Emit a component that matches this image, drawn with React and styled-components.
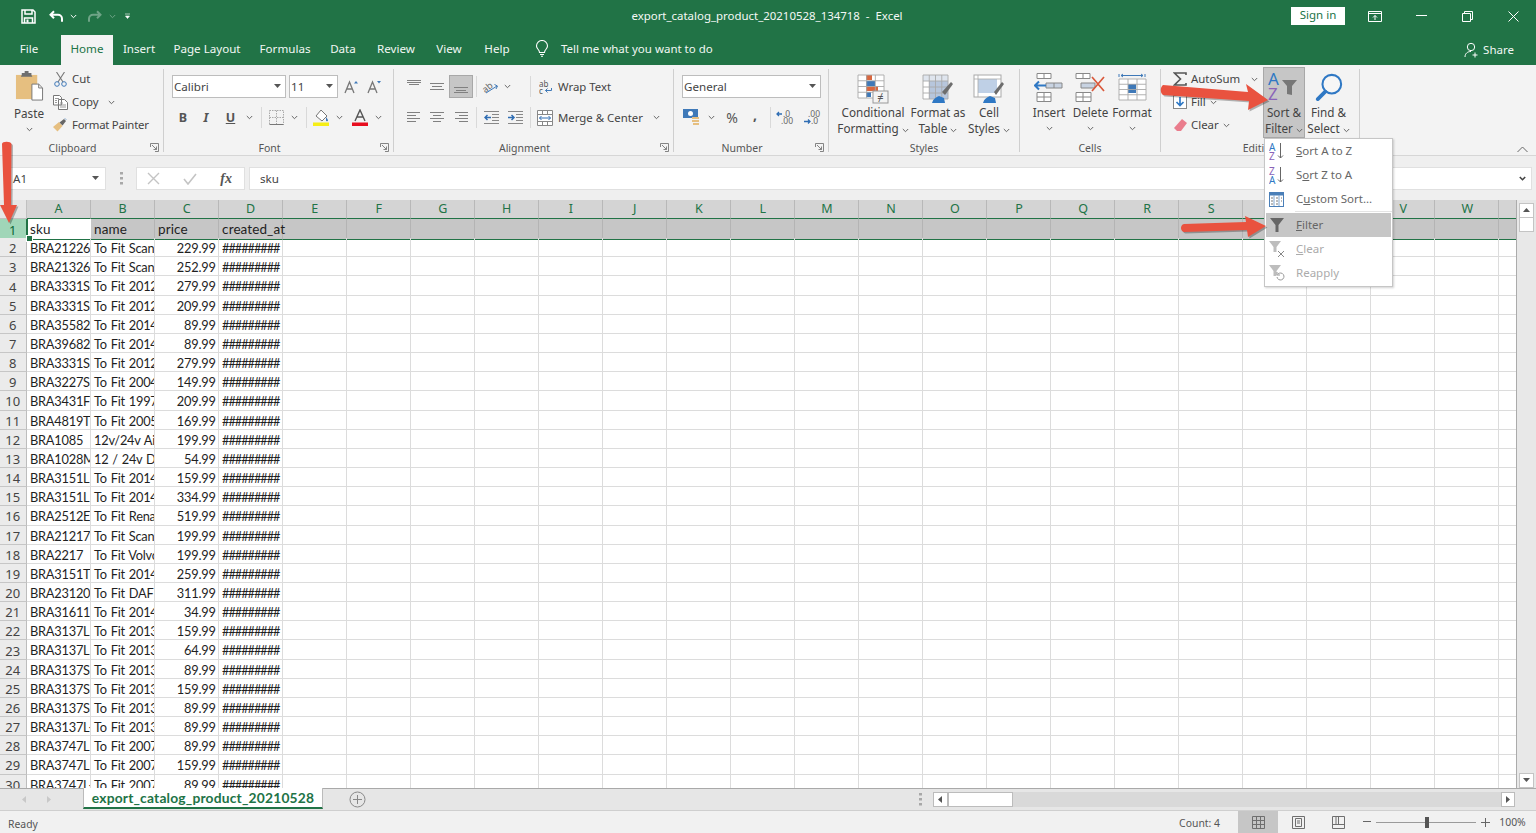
import React from 'react';
import styled, { createGlobalStyle } from 'styled-components';

const UI = '"Noto Sans", "Open Sans", sans-serif';
const CELL = 'Lato, "Liberation Sans", sans-serif';
const GREEN = '#217346';

const Global = createGlobalStyle`
  html, body { margin: 0; padding: 0; background: #fff; }
  * { box-sizing: border-box; }
`;

const Page = styled.div`
  position: relative; width: 1536px; height: 833px; overflow: hidden;
  display: flex; flex-direction: column; font-family: ${UI}; font-size: 11.4px; color: #444;
`;

/* ---------- title bar ---------- */
const TitleBar = styled.header`
  height: 32px; background: ${GREEN}; color: #fff; display: flex; align-items: center; position: relative; flex: none;
`;
const Qat = styled.div`display: flex; align-items: center; padding-left: 20px; width: 600px;`;
const QatSlot = styled.span`
  width: ${p => p.$w}px; margin-left: ${p => p.$ml || 0}px; display: flex; justify-content: center; align-items: center;
  opacity: ${p => (p.$dim ? 0.35 : 1)};
`;
const DocTitle = styled.div`
  position: absolute; left: 0; width: 1534px; text-align: center; font-size: 11.45px; color: #f4f8f5; top: 8px; line-height: 16px; white-space: pre;
`;
const WinControls = styled.div`display: flex; align-items: center; margin-left: auto;`;
const SignIn = styled.button`
  width: 54px; height: 18px; border: 0; background: #fff; color: ${GREEN}; font: 11.5px/16px ${UI}; padding: 0 0 2px; margin-right: 7px;
`;
const WinBtn = styled.span`width: 46px; height: 32px; display: flex; align-items: center; justify-content: center;`;

/* ---------- tabs ---------- */
const TabBar = styled.nav`height: 33px; background: ${GREEN}; display: flex; align-items: flex-end; flex: none; color: #f2f7f4; position: relative;`;
const Tab = styled.span`
  width: ${p => p.$w}px; height: 30px; display: flex; align-items: center; justify-content: center; padding-bottom: 4px; font-size: 11.6px;
  padding-right: ${p => p.$pr || 0}px;
  background: ${p => (p.$active ? '#f3f3f3' : 'transparent')}; color: ${p => (p.$active ? GREEN : '#f2f7f4')};
`;
const TellMe = styled.span`display: flex; align-items: center; height: 30px; gap: 12px; margin-left: 12px; font-size: 11.5px; padding-bottom: 4px;`;
const Share = styled.span`margin-left: auto; height: 30px; display: flex; align-items: center; gap: 3px; padding-right: 22px; font-size: 11.5px; padding-bottom: 1px;`;

/* ---------- ribbon ---------- */
const Ribbon = styled.section`
  height: 91px; background: #f3f3f3; border-bottom: 1px solid #d6d6d6; display: flex; padding-top: 4px; flex: none; position: relative;
`;
const Group = styled.div`
  width: ${p => p.$w}px; height: 83px; border-right: 1px solid #cfcfcf; display: flex; flex-direction: column; flex: none;
`;
const GroupBody = styled.div`height: 73px; display: flex; padding-left: ${p => p.$pl || 0}px;`;
const GroupFoot = styled.div`height: 12px; display: flex; align-items: center; font-size: 10.5px; color: #555; margin-top: 0;`;
const GroupName = styled.span`flex: 1; text-align: center; line-height: 14px; margin-top: 3px;`;
const Launcher = styled.span`width: 18px; display: flex; justify-content: center; margin-top: 3px;`;
const Stack3 = styled.div`display: flex; flex-direction: column; gap: 3px; width: ${p => p.$w}px; flex: none;`;
const SmallRow = styled.div`height: 20px; display: flex; align-items: center; white-space: nowrap;`;
const SmallIcon = styled.span`width: ${p => p.$w}px; margin-left: ${p => p.$ml || 0}px; display: flex; justify-content: center; align-items: center; flex: none;`;
const SmallText = styled.span`margin-left: ${p => p.$ml || 0}px; padding-bottom: 2px; letter-spacing: ${p => p.$ls || 0}px;`;
const Stack2 = styled.div`display: flex; flex-direction: column; gap: 8px; padding-top: 6px;`;
const ToolRow = styled.div`height: 23px; display: flex; align-items: center; white-space: nowrap;`;
const Slot = styled.span`
  width: ${p => p.$w}px; height: 23px; margin-left: ${p => p.$ml || 0}px; flex: none; display: flex; align-items: center; justify-content: center;
  padding-left: ${p => p.$pl || 0}px;
  ${p => p.$on && 'background:#c6c6c6; border:1px solid #a8a8a8;'}
`;
const VSep = styled.span`width: 1px; height: 21px; background: #d9d9d9; margin-left: ${p => p.$ml || 0}px; flex: none;`;
const Combo = styled.div`
  width: ${p => p.$w}px; height: 23px; margin-left: ${p => p.$ml || 0}px; background: #fff; border: 1px solid #bdbdbd; display: flex; align-items: center;
  justify-content: space-between; padding: 0 4px 0 1px; flex: none; font-size: 11.6px; color: #444;
`;
const Glyph = styled.span`
  font: ${p => p.$font || `700 12.5px ${UI}`}; color: #555; ${p => p.$under && 'text-decoration: underline;'}
  ${p => p.$it && 'font-style: italic;'}
  margin-bottom: ${p => p.$mb || 0}px;
`;
const Large = styled.div`
  width: ${p => p.$w}px; flex: none; display: flex; flex-direction: column; align-items: center; text-align: center; line-height: 16px;
  white-space: nowrap; font-size: 11.7px; padding-left: ${p => p.$pl || 0}px;
  ${p => p.$on && 'background:#c6c6c6; border:1px solid #a8a8a8; margin-top:-2px; height:71px;'}
`;
const LargeIcon = styled.span`height: ${p => p.$h || 35}px; display: flex; align-items: flex-start; padding-top: ${p => p.$top ?? 2}px; flex: none;`;
const ChevLine = styled.span`height: 16px; display: flex; align-items: center;`;
const Collapse = styled.span`position: absolute; right: 8px; bottom: 2px; display: flex;`;

/* ---------- formula ---------- */
const FormulaBar = styled.div`
  height: 44px; background: #efefef; padding: 11px 4px 0 10px; display: flex; align-items: flex-start; flex: none; font-size: 11.6px;
`;
const NameBox = styled.div`
  width: 96px; height: 23px; background: #fff; display: flex; align-items: center; justify-content: space-between; padding: 0 6px 0 2px; color: #444; flex: none;
  border: 1px solid #e0e0e0;
`;
const Dots = styled.span`width: 30px; height: 23px; flex: none; display: flex; justify-content: center; align-items: center;`;
const FxBox = styled.div`
  width: 109px; height: 23px; background: #fff; border: 1px solid #e0e0e0; display: flex; align-items: center; flex: none; justify-content: space-between; padding: 0 12px 0 10px;
`;
const Fx = styled.span`font: italic 700 14px "Liberation Serif", serif; color: #555;`;
const Input = styled.div`
  flex: 1; margin-left: 4px; height: 23px; background: #fff; border: 1px solid #e0e0e0; display: flex; align-items: center; justify-content: space-between;
  padding: 0 5px 0 10px; color: #444;
`;

/* ---------- sheet ---------- */
const SheetArea = styled.main`flex: 1; min-height: 0; display: flex; background: #fff; overflow: hidden;`;
const GridPane = styled.div`width: 1516px; overflow: hidden; flex: none;`;
const GridRow = styled.div`display: grid; grid-template-columns: 26.5px repeat(24, 64.04px); height: ${p => p.$h}px;`;
const Corner = styled.div`background: #e6e6e6; border-right: 1px solid #c0c0c0; border-bottom: 1px solid #c0c0c0;`;
const ColHead = styled.div`
  background: #d4d4d4; color: ${GREEN}; border-right: 1px solid #b8b8b8; border-bottom: 1px solid ${GREEN};
  display: flex; align-items: center; justify-content: center; font-size: 12.5px; line-height: 1; padding: 1px 0 0 1px;
`;
const RowHead = styled.div`
  background: ${p => (p.$sel ? '#a0d6b8' : '#ebebeb')}; color: ${p => (p.$sel ? '#0e6637' : '#444')};
  border-right: 1px solid ${p => (p.$sel ? GREEN : '#bdbdbd')}; border-bottom: 1px solid #c6c6c6;
  display: flex; align-items: center; justify-content: center; font-size: 13px; line-height: 1; padding-top: 3px;
`;
const Cell = styled.div`
  position: relative; font: 12.8px/21px ${CELL}; color: #1f1f1f; white-space: nowrap; overflow: hidden; padding: 0 2px 0 3.5px; word-spacing: .8px;
  letter-spacing: ${p => (p.$hash ? '-1.05px' : '-.22px')};
  border-right: 1px solid #dcdcdc; border-bottom: 1px solid #dcdcdc; text-align: ${p => (p.$num ? 'right' : 'left')};
`;
const SelCell = styled(Cell)`
  background: #c6c6c6; border-right-color: #b4b4b4; border-bottom: 1px solid ${GREEN}; overflow: visible; font-size: 13.5px; line-height: 20px; letter-spacing: .1px;
  z-index: ${p => (p.$over ? 1 : 0)};
`;
const ActiveCell = styled(SelCell)`
  background: #fff; border-left: 1px solid ${GREEN}; padding-left: 2.5px; border-right-color: transparent;
  &::after { content: ''; position: absolute; left: -2px; bottom: -3px; width: 5px; height: 5px; background: ${GREEN}; border: 1px solid #fff; }
`;
const VScroll = styled.aside`width: 20px; background: #e8e8e8; border-left: 1px solid #ababab; display: flex; flex-direction: column; align-items: center; padding-top: 3px;`;
const ScrollBtn = styled.span`
  width: 15px; height: 15px; background: #fff; border: 1px solid #c4c4c4; display: flex; align-items: center; justify-content: center; flex: none;
`;
const VThumb = styled.span`width: 15px; height: 15px; background: #fff; border: 1px solid #c4c4c4; margin-top: -1px; flex: none;`;
const Spring = styled.span`flex: 1;`;

/* ---------- sheet tabs ---------- */
const SheetTabs = styled.div`
  height: 23px; background: #e6e6e6; border-top: 1px solid #a9a9a9; border-bottom: 1px solid #cfcfcf; display: flex; align-items: stretch; flex: none;
`;
const NavArrows = styled.span`width: 83px; display: flex; align-items: center; gap: 18px; padding-left: 21px; flex: none;`;
const SheetTab = styled.span`
  width: 240px; background: #fff; color: ${GREEN}; font: 700 13.8px ${CELL}; display: flex; align-items: center; justify-content: center; margin-top: -1px;
  border-bottom: 2px solid ${GREEN}; border-left: 1px solid #bbb; border-right: 1px solid #bbb; height: 21px; flex: none; letter-spacing: .2px;
`;
const AddSheet = styled.span`margin-left: 26px; display: flex; align-items: center; flex: none;`;
const HDots = styled.span`margin-left: auto; width: 20px; padding-right: 6px; display: flex; align-items: center; justify-content: center;`;
const HScroll = styled.div`width: 582px; margin-right: 21px; display: flex; align-items: center; background: #d9d9d9; margin-top: 3px; height: 15px;`;
const HBtn = styled.span`width: ${p => p.$w}px; height: 15px; background: #fff; border: 1px solid #bcbcbc; display: flex; align-items: center; justify-content: center; flex: none;`;

/* ---------- status ---------- */
const StatusBar = styled.footer`height: 22px; background: #f1f1f1; display: flex; align-items: center; padding-left: 8px; font-size: 10.4px; color: #555; flex: none;`;
const Ready = styled.span`padding-top: 3px;`;
const Count = styled.span`margin-right: 18px; padding-top: 1px;`;
const StatusRight = styled.div`margin-left: auto; display: flex; align-items: center; height: 100%;`;
const ViewBtn = styled.span`
  width: ${p => p.$w}px; height: 100%; display: flex; align-items: center; justify-content: center; background: ${p => (p.$on ? '#c6c6c6' : 'transparent')};
  padding-right: ${p => p.$pr || 0}px;
`;
const Slider = styled.span`width: 100px; height: 1px; background: #9a9a9a; position: relative;`;
const SliderThumb = styled.span`position: absolute; left: 49px; top: -5px; width: 4px; height: 11px; background: #555;`;

/* ---------- menu ---------- */
const Menu = styled.div`
  position: absolute; left: 1264px; top: 138px; width: 129px; height: 149px; background: #fff; border: 1px solid #c6c6c6; box-shadow: 1px 1px 2px rgba(0,0,0,.18); font-size: 11.5px; z-index: 2;
`;
const MenuItem = styled.div`
  height: 24px; display: flex; align-items: center; margin: 0 1px; color: ${p => (p.$off ? '#ababab' : '#666')}; background: ${p => (p.$on ? '#c6c6c6' : 'transparent')};
  white-space: nowrap;
`;
const MenuIcon = styled.span`width: 30px; display: flex; justify-content: flex-start; padding-left: 3px; flex: none;`;
const MenuLabel = styled.span`padding-bottom: 2px;`;
const MenuSep = styled.div`height: 2px; margin-left: 30px; border-top: 1px solid #e4e4e4;`;
const Key = styled.u`text-underline-offset: 1px;`;
const Overlay = styled.svg`position: absolute; left: ${p => p.$x}px; top: ${p => p.$y}px; overflow: visible; pointer-events: none; z-index: 3;`;

/* ---------- icons ---------- */
const Chev = ({ c = '#666', sw = 1 }) => <svg width="7" height="5" viewBox="0 0 7 5"><path d="M.8 1 3.5 3.7 6.2 1" fill="none" stroke={c} strokeWidth={sw} /></svg>;
const Tri = ({ d = 'down', c = '#555' }) => {
  const p = { down: 'M0 1h7L3.5 5z', up: 'M0 5h7L3.5 1z', left: 'M5 0v7L1 3.5z', right: 'M1 0v7l4-3.5z' }[d];
  return <svg width="7" height="7" viewBox="0 0 7 7"><path d={p} fill={c} /></svg>;
};
const LaunchIcon = () => <svg width="9" height="9" viewBox="0 0 9 9"><path d="M.5 4V.5H8.5V8.5H5M2 2l4.5 4.5M6.5 3.5v3h-3" fill="none" stroke="#777" strokeWidth=".9" /></svg>;
const Save = () => <svg width="15" height="15" viewBox="0 0 15 15"><path d="M1 1h11l2 2v11H1z" fill="none" stroke="#fff" strokeWidth="1.5" /><path d="M4 1v4h7V1M3.5 14V9h8v5" fill="none" stroke="#fff" strokeWidth="1.5" /><path d="M5.5 10.5h2v3h-2z" fill="#fff" /></svg>;
const Undo = ({ c = '#fff' }) => <svg width="15" height="13" viewBox="0 0 15 13"><path d="M5 1.2 1.5 4.7 5 8.2M2 4.7h7a4 4 0 0 1 4 4v3" fill="none" stroke={c} strokeWidth="2" /></svg>;
const Redo = () => <svg width="15" height="13" viewBox="0 0 15 13"><path d="M10 1.2l3.5 3.5L10 8.200M13 4.700H6a4 4 0 0 0-4 4v3" fill="none" stroke="#fff" strokeWidth="2" /></svg>;
const Custom = () => <svg width="7" height="7" viewBox="0 0 7 7"><path d="M1 1h5M1.500 3h4L3.500 5.500z" fill="#fff" stroke="#fff" strokeWidth=".6" /></svg>;
const DisplayOpt = () => <svg width="14" height="11" viewBox="0 0 14 11"><path d="M.5.500h13v10H.5zM.5 2.500h13" fill="none" stroke="#fff" /><path d="M7 9V4.500M5 6.500l2-2 2 2" fill="none" stroke="#fff" /></svg>;
const Min = () => <svg width="11" height="2"><rect width="11" height="1" fill="#fff" /></svg>;
const Restore = () => <svg width="11" height="11" viewBox="0 0 11 11"><path d="M.5 2.500h8v8h-8zM2.500 2.500v-2h8v8h-2" fill="none" stroke="#fff" /></svg>;
const Close = () => <svg width="11" height="11" viewBox="0 0 11 11"><path d="M.5.500l10 10M10.500.500l-10 10" stroke="#fff" fill="none" /></svg>;
const Bulb = () => <svg width="14" height="17" viewBox="0 0 14 17"><path d="M4.500 12.500C4.500 9.500 1.500 9 1.500 6a5.500 5.500 0 0 1 11 0c0 3-3 3.500-3 6.500zM5 14.500h4M6 16.200h2" fill="none" stroke="#fff" strokeWidth="1.100" /></svg>;
const ShareIcon = () => <svg width="16" height="16" viewBox="0 0 16 16"><circle cx="7" cy="5" r="3.700" fill="none" stroke="#fff" /><path d="M1 15c0-3.500 2.500-5.500 6-5.500M11 10.500v5M8.500 13h5" fill="none" stroke="#fff" /></svg>;

const Paste = () => (
  <svg width="29" height="32" viewBox="0 0 30 33">
    <rect x="1" y="4" width="22" height="25" fill="#e6bf80" />
    <path d="M7 4V2h3V0h4v2h3v2l1 2H6z" fill="#6f6f6f" />
    <path d="M17.500 13.500h7l4 4V30h-11z" fill="#fff" stroke="#777" />
    <path d="M24.500 13.500v4h4" fill="none" stroke="#777" />
  </svg>
);
const Scissors = () => <svg width="13" height="15" viewBox="0 0 13 15"><path d="M2.500 0 9 10M10.500 0 4 10" stroke="#777" strokeWidth="1.100" fill="none" /><circle cx="3" cy="12" r="2.300" fill="none" stroke="#3f79b8" /><circle cx="10" cy="12" r="2.300" fill="none" stroke="#3f79b8" /></svg>;
const Copy = () => <svg width="15" height="15" viewBox="0 0 15 15"><path d="M.5.500h6l2 2V10H.5zM5.500 4.500h6l3 3v7h-9z" fill="#fff" stroke="#777" /><path d="M2 3.500h4M2 5.500h2M2 7.500h2M7 8h3M7 10h6M7 12h6" stroke="#999" /></svg>;
const Painter = () => <svg width="15" height="14" viewBox="0 0 15 14"><path d="M0 9l6-5 3.500 4-5 5.500C3 12 1.500 10.500 0 9z" fill="#e6bf80" /><path d="M6.500 4.500 11 1l2 2-3.500 4.500z" fill="#666" /><path d="M12 .5l1 1" stroke="#3f79b8" /></svg>;
const GrowA = ({ shrink }) => <svg width="15" height="14" viewBox="0 0 15 14"><path d="M1 13 5.500 2 10 13M3 9h5" fill="none" stroke="#777" strokeWidth="1.300" /><path d={shrink ? 'M10 1h4l-2 2.500z' : 'M10 3.500h4L12 1z'} fill="#3f79b8" /></svg>;
const BorderI = () => <svg width="15" height="15" viewBox="0 0 15 15"><path d="M.5.500h14v14H.5zM.5 7.500h14M7.500.500v14" fill="none" stroke="#aaa" strokeDasharray="1.500 1" /><path d="M.5 14.500h14" stroke="#777" /></svg>;
const Fill = () => <svg width="17" height="17" viewBox="0 0 17 17"><path d="M8 1 14 7l-5 5-6-5z" fill="#fff" stroke="#777" /><path d="M13 8c1 1.500 2 2.500 2 3.500s-2 1-2 0z" fill="#3f79b8" /><rect y="13.500" width="16" height="3.500" fill="#f6ee16" /></svg>;
const ColorA = () => <svg width="16" height="17" viewBox="0 0 16 17"><path d="M3 12 8 1l5 11M5 8h6" fill="none" stroke="#555" strokeWidth="1.400" /><rect y="13.500" width="16" height="3.500" fill="#e80d1f" /></svg>;
const Lines = ({ rows }) => <svg width="16" height="15" viewBox="0 0 16 15">{rows.map(([y, a, b], i) => <path key={i} d={`M${a} ${y + 0.5}H${b}`} stroke="#808080" fill="none" />)}</svg>;
const vTop = [[1, 1, 15], [3, 1, 15], [5, 3, 13]];
const vMid = [[4, 1, 15], [7, 3, 13], [10, 1, 15]];
const vBot = [[8, 1, 15], [11, 3, 13], [13, 1, 15]];
const hLeft = [[2, 1, 14], [5, 1, 10], [8, 1, 14], [11, 1, 10]];
const hMid = [[2, 1, 15], [5, 4, 12], [8, 1, 15], [11, 4, 12]];
const hRight = [[2, 2, 15], [5, 6, 15], [8, 2, 15], [11, 6, 15]];
const Orient = () => <svg width="17" height="15" viewBox="0 0 17 15"><text x="0" y="11" transform="rotate(-40 6 8)" fontFamily="Noto Sans" fontSize="9" fill="#666">ab</text><path d="M4 14 15 7M12.500 5.500 15.500 7l-1.500 3" fill="none" stroke="#3f79b8" /></svg>;
const Indent = ({ flip }) => <svg width="15" height="13" viewBox="0 0 15 13"><path d="M0 .5h15M0 12.500h15M8 3.500h7M8 6.500h7M8 9.500h7" stroke="#888" fill="none" /><path d={flip ? 'M0 6.500h6M3.500 4l2.500 2.500L3.500 9' : 'M7 6.500H1M3.500 4 1 6.500 3.500 9'} stroke="#2f6db3" strokeWidth="1.500" fill="none" /></svg>;
const Wrap = () => <svg width="15" height="14" viewBox="0 0 15 14"><text x="0" y="6.500" fontFamily="Noto Sans" fontSize="8" fill="#555">ab</text><text x="0" y="13.500" fontFamily="Noto Sans" fontSize="8" fill="#555">c</text><path d="M6.500 10.500h6V8M6.500 10.500l2-2M6.500 10.500l2 2" fill="none" stroke="#3f79b8" /></svg>;
const Merge = () => <svg width="16" height="16" viewBox="0 0 16 16"><path d="M.5.500h15v15H.5zM.5 4.500h15M.5 11.500h15M5.500.500v4M10.500.500v4M5.500 11.500v4M10.500 11.500v4" fill="#fff" stroke="#888" /><path d="M2.500 8h11M4.500 6l-2 2 2 2M11.500 6l2 2-2 2" fill="none" stroke="#2f6db3" /></svg>;
const Accounting = () => <svg width="18" height="17" viewBox="0 0 18 17"><rect x="0" y="0" width="15" height="9" fill="#3f79b8" /><circle cx="7.500" cy="4.500" r="2.500" fill="#fff" /><path d="M9 8h7v2H9zM9 11h7v2H9zM10 14h6v2h-6z" fill="#e6bf80" /></svg>;
const Dec = ({ inc }) => (
  <svg width="19" height="15" viewBox="0 0 19 15">
    <text x={inc ? 7 : 5} y="6.500" fontFamily="Noto Sans" fontSize="8.500" fill="#666">{inc ? '.0' : '.00'}</text>
    <text x={inc ? 5 : 8} y="14" fontFamily="Noto Sans" fontSize="8.500" fill="#666">{inc ? '.00' : '.0'}</text>
    {inc ? <path d="M1 4h5M3 2 1 4l2 2" stroke="#2f6db3" strokeWidth="1.300" fill="none" /> : <path d="M1 11.500h6M5 9.500l2 2-2 2" stroke="#2f6db3" strokeWidth="1.300" fill="none" />}
  </svg>
);
const Table = ({ x = 0, y = 0, w = 27, h = 27, cols = 4, rows = 4, stroke = '#a9a9a9' }) => {
  const d = [];
  for (let i = 0; i <= cols; i++) d.push(`M${x + (w * i) / cols} ${y}v${h}`);
  for (let i = 0; i <= rows; i++) d.push(`M${x} ${y + (h * i) / rows}h${w}`);
  return <path d={d.join('')} fill="none" stroke={stroke} strokeWidth=".9" />;
};
const CondFmt = () => (
  <svg width="32" height="30" viewBox="0 0 32 30">
    <rect x="1" y="1" width="26" height="23" fill="#fff" />
    <rect x="9" y="1" width="6" height="5" fill="#d9673f" /><rect x="9" y="7" width="9" height="5" fill="#3f79b8" /><rect x="9" y="12" width="12" height="5" fill="#d9673f" /><rect x="9" y="18" width="5" height="5" fill="#3f79b8" />
    <Table x={1} y={1} w={26} h={23} cols={3} rows={4} />
    <rect x="16" y="17" width="15" height="12" fill="#f3f3f3" stroke="#999" />
    <text x="23.500" y="27" textAnchor="middle" fontFamily="Noto Sans" fontSize="11" fill="#555">≠</text>
  </svg>
);
const FmtTable = () => (
  <svg width="32" height="30" viewBox="0 0 32 30">
    <rect x="1" y="1" width="25" height="24" fill="#fff" /><rect x="1" y="1" width="25" height="6" fill="#dfe5ee" /><rect x="7" y="7" width="19" height="18" fill="#b7c6dc" />
    <Table x={1} y={1} w={25} h={24} cols={4} rows={4} />
    <path d="M20 18 29 8l2 2-8 11z" fill="#6d6d6d" />
    <path d="M10 29c1-4 4-6 7-7l5 2 1 5z" fill="#2f78c4" />
  </svg>
);
const CellSty = () => (
  <svg width="32" height="30" viewBox="0 0 32 30">
    <rect x="1" y="1" width="27" height="22" fill="#fff" stroke="#a9a9a9" /><rect x="5" y="5" width="19" height="14" fill="#bfd0e6" /><path d="M1 5h27M5 1v22" stroke="#a9a9a9" fill="none" strokeWidth=".8" />
    <path d="M21 18 29 8l2 2-8 11z" fill="#6d6d6d" />
    <path d="M10 29c1-4 4-6 7-7l5 2 1 5z" fill="#2f78c4" />
  </svg>
);
const InsertI = () => (
  <svg width="31" height="30" viewBox="0 0 31 30">
    <path d="M3 .5h14v5H3zM10 .5v5" fill="#fff" stroke="#888" />
    <path d="M3 19.500h14v9H3zM3 24h14M10 19.500v9" fill="#fff" stroke="#888" />
    <path d="M12 10h16v5H12zM20 10v5" fill="#c8d3e2" stroke="#888" />
    <path d="M12 12.500H1M5 8.500l-4 4 4 4" fill="none" stroke="#2f78c4" strokeWidth="2" />
  </svg>
);
const DeleteI = () => (
  <svg width="31" height="30" viewBox="0 0 31 30">
    <path d="M1 .5h14v5H1zM8 .5v5" fill="#fff" stroke="#888" />
    <path d="M1 19.500h15v9H1zM1 24h15M8 19.500v9" fill="#fff" stroke="#888" />
    <path d="M6 10h14v5H6z" fill="#c8d3e2" stroke="#888" />
    <path d="M17 4l12 14M29 4 17 18" stroke="#d9583b" strokeWidth="1.700" fill="none" />
  </svg>
);
const FormatI = () => (
  <svg width="29" height="30" viewBox="0 0 29 30">
    <path d="M1 1v3M27 1v3M3 2.500h22" stroke="#3f79b8" fill="none" /><path d="M5 1 3 2.500 5 4M23 1l2 1.500L23 4" stroke="#3f79b8" fill="none" />
    <rect x="1" y="6" width="27" height="21" fill="#fff" />
    <rect x="10" y="11" width="8" height="9" fill="#3f79b8" />
    <Table x={1} y={6} w={27} h={21} cols={3} rows={4} />
  </svg>
);
const Sigma = () => <svg width="14" height="14" viewBox="0 0 14 14"><path d="M13 3V1H1.500L7.500 7 1.500 13H13v-2" fill="none" stroke="#555" strokeWidth="1.600" /></svg>;
const FillDown = () => <svg width="14" height="14" viewBox="0 0 14 14"><rect x=".5" y=".5" width="13" height="13" fill="#fff" stroke="#888" /><path d="M7 2v8M3.500 7 7 10.500 10.500 7" fill="none" stroke="#2f78c4" strokeWidth="1.700" /></svg>;
const Eraser = () => <svg width="14" height="13" viewBox="0 0 14 13"><path d="M9 0l5 4-6 8H4L1 9z" fill="#ea7d8d" /></svg>;
const Funnel = ({ c = '#777', w = 16, h = 16 }) => <svg width={w} height={h} viewBox="0 0 16 16"><path d="M1 1h14L9.500 8v7h-3V8z" fill={c} /></svg>;
const SortFilter = () => (
  <svg width="34" height="31" viewBox="0 0 34 31">
    <text x="1" y="14" fontFamily="Noto Sans" fontSize="17" fill="#2f78c4">A</text>
    <text x="1" y="29" fontFamily="Noto Sans" fontSize="17" fill="#8a63b8">Z</text>
    <path d="M15 9h15l-5 6v9l-5-1v-8z" fill="#777" />
  </svg>
);
const Magnifier = () => <svg width="30" height="28" viewBox="0 0 30 30"><circle cx="18" cy="12" r="10" fill="#fff" fillOpacity=".3" stroke="#2f78c4" strokeWidth="2.200" /><path d="M11 20 3 28" stroke="#2f78c4" strokeWidth="4" strokeLinecap="round" /></svg>;
const SortAZ = ({ rev }) => (
  <svg width="15" height="17" viewBox="0 0 15 17">
    <text x="0" y="8" fontFamily="Noto Sans" fontSize="10" fill={rev ? '#8a63b8' : '#2f78c4'}>{rev ? 'Z' : 'A'}</text>
    <text x="0" y="16.500" fontFamily="Noto Sans" fontSize="10" fill={rev ? '#2f78c4' : '#8a63b8'}>{rev ? 'A' : 'Z'}</text>
    <path d="M11.500 0v15M9 12.500l2.500 2.500 2.500-2.500" stroke="#666" fill="none" />
  </svg>
);
const CustomSort = () => (
  <svg width="15" height="15" viewBox="0 0 15 15">
    <rect x=".5" y=".5" width="14" height="14" fill="#fff" stroke="#4a7fb8" /><rect x=".5" y=".5" width="14" height="3" fill="#4a7fb8" />
    <path d="M5 3.500v11M10 3.500v11" stroke="#4a7fb8" strokeWidth=".7" />
    <path d="M2 6h2M2 9h2M2 12h2M7 6h2M7 9h2M7 12h2M12 6h1M12 9h1" stroke="#777" />
  </svg>
);
const ClearF = () => <svg width="16" height="17" viewBox="0 0 16 17"><path d="M0 0h12L7.500 6v5h-3V6z" fill="#bdbdbd" /><path d="M9 10l6 6M15 10l-6 6" stroke="#888" fill="none" /></svg>;
const Reapply = () => <svg width="16" height="17" viewBox="0 0 16 17"><path d="M0 0h12L7.500 6v5h-3V6z" fill="#bdbdbd" /><path d="M8 12a3.500 3.500 0 1 0 1-3M8 7v3h3" stroke="#999" fill="none" /></svg>;
const Cross = () => <svg width="13" height="13" viewBox="0 0 13 13"><path d="M1 1l11 11M12 1 1 12" stroke="#c4c4c4" strokeWidth="1.400" fill="none" /></svg>;
const Tick = () => <svg width="14" height="12" viewBox="0 0 14 12"><path d="M1 6l4 5L13 1" stroke="#c4c4c4" strokeWidth="1.600" fill="none" /></svg>;
const Vdots = () => <svg width="3" height="13" viewBox="0 0 3 13"><path d="M0 0h3v2.500H0zM0 5h3v2.500H0zM0 10h3v2.500H0z" fill="#a8a8a8" /></svg>;
const PlusCircle = () => <svg width="17" height="17" viewBox="0 0 17 17"><circle cx="8.500" cy="8.500" r="7.500" fill="none" stroke="#888" /><path d="M8.500 4v9M4 8.500h9" stroke="#888" /></svg>;
const NormalV = () => <svg width="13" height="13" viewBox="0 0 13 13"><path d="M.5.500h12v12H.5zM.5 4.500h12M.5 8.500h12M4.500.500v12M8.500.500v12" fill="none" stroke="#6f6f6f" /></svg>;
const PageV = () => <svg width="13" height="13" viewBox="0 0 13 13"><path d="M.5.500h12v12H.5z" fill="none" stroke="#6f6f6f" /><path d="M3.500 2.500h6v8h-6zM5 5h3M5 7h3" fill="none" stroke="#6f6f6f" /></svg>;
const BreakV = () => <svg width="13" height="13" viewBox="0 0 13 13"><path d="M.5.500h12v12H.5zM.5 8.500h12M6.500.500v8M4 .5v8" fill="none" stroke="#6f6f6f" /></svg>;

/* ---------- arrows ---------- */
const RED = '#e9523f';
const ArrowShape = ({ d }) => (
  <>
    <path d={d} fill="#000" opacity=".28" transform="translate(1.500 1.500)" />
    <path d={d} fill={RED} />
  </>
);

/* ---------- data ---------- */
const COLS = 'ABCDEFGHIJKLMNOPQRSTUVWX'.split('');
const DATA = [
  ['BRA21226', 'To Fit Scania', '229.99'], ['BRA21326', 'To Fit Scania', '252.99'], ['BRA3331SL', 'To Fit 2012 On', '279.99'],
  ['BRA3331SR', 'To Fit 2012 On', '209.99'], ['BRA35582', 'To Fit 2014 On', '89.99'], ['BRA39682', 'To Fit 2014 On', '89.99'],
  ['BRA3331SL', 'To Fit 2012 On', '279.99'], ['BRA3227SL', 'To Fit 2004 On', '149.99'], ['BRA3431FL', 'To Fit 1997 On', '209.99'],
  ['BRA4819TL', 'To Fit 2005 On', '169.99'], ['BRA1085', '12v/24v Air Horn', '199.99'], ['BRA1028M', '12 / 24v Diode', '54.99'],
  ['BRA3151L', 'To Fit 2014 On', '159.99'], ['BRA3151LL', 'To Fit 2014 On', '334.99'], ['BRA2512E', 'To Fit Renault', '519.99'],
  ['BRA21217', 'To Fit Scania', '199.99'], ['BRA2217', 'To Fit Volvo', '199.99'], ['BRA3151T', 'To Fit 2014 On', '259.99'],
  ['BRA23120', 'To Fit DAF', '311.99'], ['BRA31611', 'To Fit 2014 On', '34.99'], ['BRA3137LL', 'To Fit 2013 On', '159.99'],
  ['BRA3137L', 'To Fit 2013 On', '64.99'], ['BRA3137S', 'To Fit 2013 On', '89.99'], ['BRA3137SL', 'To Fit 2013 On', '159.99'],
  ['BRA3137S-', 'To Fit 2013 On', '89.99'], ['BRA3137L-', 'To Fit 2013 On', '89.99'], ['BRA3747L', 'To Fit 2007 On', '89.99'],
  ['BRA3747LL', 'To Fit 2007 On', '159.99'], ['BRA3747L-', 'To Fit 2007 On', '89.99'],
];
const HEAD = ['sku', 'name', 'price', 'created_at'];
const TABS = [['File', 61, false, 3], ['Home', 52, true], ['Insert', 52], ['Page Layout', 84], ['Formulas', 72], ['Data', 44], ['Review', 62], ['View', 44], ['Help', 52]];

const Foot = ({ name, launch }) => (
  <GroupFoot><GroupName>{name}</GroupName>{launch && <Launcher><LaunchIcon /></Launcher>}</GroupFoot>
);
const Big = ({ w, icon, l1, l2, chev, on, top }) => (
  <Large $w={w} $on={on}>
    <LargeIcon $top={top} $h={on ? 36 : 35}>{icon}</LargeIcon>
    <span>{l1}</span>
    {l2 ? <span>{l2} {chev && <Chev />}</span> : <ChevLine><Chev /></ChevLine>}
  </Large>
);

export default function App() {
  return (
    <Page>
      <Global />
      <TitleBar>
        <Qat>
          <QatSlot $w={16}><Save /></QatSlot>
          <QatSlot $w={16} $ml={12}><Undo /></QatSlot>
          <QatSlot $w={10} $ml={4}><Chev c="#fff" /></QatSlot>
          <QatSlot $w={16} $ml={8} $dim><Redo /></QatSlot>
          <QatSlot $w={10} $ml={5} $dim><Chev c="#fff" /></QatSlot>
          <QatSlot $w={10} $ml={5}><Custom /></QatSlot>
        </Qat>
        <DocTitle>{'export_catalog_product_20210528_134718  -  Excel'}</DocTitle>
        <WinControls>
          <SignIn>Sign in</SignIn>
          <WinBtn><DisplayOpt /></WinBtn>
          <WinBtn><Min /></WinBtn>
          <WinBtn><Restore /></WinBtn>
          <WinBtn><Close /></WinBtn>
        </WinControls>
      </TitleBar>
      <TabBar>
        {TABS.map(([t, w, a, pr]) => <Tab key={t} $w={w} $active={a} $pr={pr}>{t}</Tab>)}
        <TellMe><Bulb />Tell me what you want to do</TellMe>
        <Share><ShareIcon />Share</Share>
      </TabBar>

      <Ribbon>
        <Group $w={164}>
          <GroupBody>
            <Large $w={52} $pl={6}>
              <LargeIcon $h={36}><Paste /></LargeIcon>
              <span>Paste</span>
              <ChevLine><Chev /></ChevLine>
            </Large>
            <Stack3 $w={110}>
              <SmallRow><SmallIcon $w={16}><Scissors /></SmallIcon><SmallText $ml={4}>Cut</SmallText></SmallRow>
              <SmallRow><SmallIcon $w={16}><Copy /></SmallIcon><SmallText $ml={4}>Copy</SmallText><SmallIcon $w={10} $ml={8}><Chev /></SmallIcon></SmallRow>
              <SmallRow><SmallIcon $w={16}><Painter /></SmallIcon><SmallText $ml={4} $ls={-0.25}>Format Painter</SmallText></SmallRow>
            </Stack3>
          </GroupBody>
          <Foot name="Clipboard" launch />
        </Group>

        <Group $w={230}>
          <GroupBody $pl={8}>
            <Stack2>
              <ToolRow>
                <Combo $w={114}><span>Calibri</span><Tri /></Combo>
                <Combo $w={49} $ml={3}><span>11</span><Tri /></Combo>
                <Slot $w={23} $ml={2}><GrowA /></Slot>
                <Slot $w={23}><GrowA shrink /></Slot>
              </ToolRow>
              <ToolRow>
                <Slot $w={22}><Glyph>B</Glyph></Slot>
                <Slot $w={24}><Glyph $it>I</Glyph></Slot>
                <Slot $w={25}><Glyph $under>U</Glyph></Slot>
                <Slot $w={12}><Chev /></Slot>
                <VSep $ml={6} />
                <Slot $w={28}><BorderI /></Slot>
                <Slot $w={8}><Chev /></Slot>
                <VSep $ml={8} />
                <Slot $w={28}><Fill /></Slot>
                <Slot $w={8}><Chev /></Slot>
                <Slot $w={28} $ml={3}><ColorA /></Slot>
                <Slot $w={8}><Chev /></Slot>
              </ToolRow>
            </Stack2>
          </GroupBody>
          <Foot name="Font" launch />
        </Group>

        <Group $w={280}>
          <GroupBody $pl={8}>
            <Stack2>
              <ToolRow>
                <Slot $w={23}><Lines rows={vTop} /></Slot>
                <Slot $w={24}><Lines rows={vMid} /></Slot>
                <Slot $w={24} $on><Lines rows={vBot} /></Slot>
                <VSep $ml={3} />
                <Slot $w={26}><Orient /></Slot>
                <Slot $w={8}><Chev /></Slot>
                <VSep $ml={19} />
                <Slot $w={27} $pl={3}><Wrap /></Slot>
                <span>Wrap Text</span>
              </ToolRow>
              <ToolRow>
                <Slot $w={23}><Lines rows={hLeft} /></Slot>
                <Slot $w={24}><Lines rows={hMid} /></Slot>
                <Slot $w={24}><Lines rows={hRight} /></Slot>
                <VSep $ml={3} />
                <Slot $w={28}><Indent /></Slot>
                <Slot $w={20}><Indent flip /></Slot>
                <VSep $ml={5} />
                <Slot $w={27}><Merge /></Slot>
                <span>Merge &amp; Center</span>
                <Slot $w={10} $ml={9}><Chev /></Slot>
              </ToolRow>
            </Stack2>
          </GroupBody>
          <Foot name="Alignment" launch />
        </Group>

        <Group $w={155}>
          <GroupBody $pl={8}>
            <Stack2>
              <ToolRow><Combo $w={139}><span>General</span><Tri /></Combo></ToolRow>
              <ToolRow>
                <Slot $w={20}><Accounting /></Slot>
                <Slot $w={18}><Chev /></Slot>
                <Slot $w={24}><Glyph $font={`14px ${UI}`}>%</Glyph></Slot>
                <Slot $w={22}><Glyph $font={`700 14px ${UI}`} $mb={7}>,</Glyph></Slot>
                <VSep $ml={4} />
                <Slot $w={28}><Dec inc /></Slot>
                <Slot $w={26}><Dec /></Slot>
              </ToolRow>
            </Stack2>
          </GroupBody>
          <Foot name="Number" launch />
        </Group>

        <Group $w={191}>
          <GroupBody $pl={9}>
            <Big w={70} top={5} icon={<CondFmt />} l1="Conditional" l2="Formatting" chev />
            <Big w={60} top={5} icon={<FmtTable />} l1="Format as" l2="Table" chev />
            <Big w={42} top={5} icon={<CellSty />} l1="Cell" l2="Styles" chev />
          </GroupBody>
          <Foot name="Styles" />
        </Group>

        <Group $w={141}>
          <GroupBody $pl={8}>
            <Big w={42} top={4} icon={<InsertI />} l1="Insert" />
            <Big w={41} top={4} icon={<DeleteI />} l1="Delete" />
            <Big w={42} top={4} icon={<FormatI />} l1="Format" />
          </GroupBody>
          <Foot name="Cells" />
        </Group>

        <Group $w={199}>
          <GroupBody>
            <Stack3 $w={102}>
              <SmallRow><SmallIcon $w={18} $ml={10}><Sigma /></SmallIcon><SmallText $ml={2}>AutoSum</SmallText><SmallIcon $w={10} $ml={9}><Chev /></SmallIcon></SmallRow>
              <SmallRow><SmallIcon $w={18} $ml={10}><FillDown /></SmallIcon><SmallText $ml={2}>Fill</SmallText><SmallIcon $w={10} $ml={3}><Chev /></SmallIcon></SmallRow>
              <SmallRow><SmallIcon $w={18} $ml={10}><Eraser /></SmallIcon><SmallText $ml={2}>Clear</SmallText><SmallIcon $w={10} $ml={3}><Chev /></SmallIcon></SmallRow>
            </Stack3>
            <Big w={42} on top={3} icon={<SortFilter />} l1="Sort &" l2="Filter" chev />
            <Big w={47} top={4} icon={<Magnifier />} l1="Find &" l2="Select" chev />
          </GroupBody>
          <Foot name="Editing" />
        </Group>
        <Collapse><svg width="11" height="7" viewBox="0 0 11 7"><path d="M.5 6 5.500 1l5 5" fill="none" stroke="#666" /></svg></Collapse>
      </Ribbon>

      <FormulaBar>
        <NameBox><span>A1</span><Tri /></NameBox>
        <Dots><Vdots /></Dots>
        <FxBox><Cross /><Tick /><Fx>fx</Fx></FxBox>
        <Input><span>sku</span><Chev c="#444" sw={1.6} /></Input>
      </FormulaBar>

      <SheetArea>
        <GridPane>
          <GridRow $h={19}>
            <Corner />
            {COLS.map(c => <ColHead key={c}>{c}</ColHead>)}
          </GridRow>
          <GridRow $h={19.17}>
            <RowHead $sel>1</RowHead>
            {COLS.map((c, i) => {
              const C = i === 0 ? ActiveCell : SelCell;
              return <C key={c} $over={i === 3}>{HEAD[i] || ''}</C>;
            })}
          </GridRow>
          {DATA.map((r, i) => (
            <GridRow key={i} $h={19.17}>
              <RowHead>{i + 2}</RowHead>
              <Cell>{r[0]}</Cell>
              <Cell>{r[1]}</Cell>
              <Cell $num>{r[2]}</Cell>
              <Cell $hash>#########</Cell>
              {COLS.slice(4).map(c => <Cell key={c} />)}
            </GridRow>
          ))}
        </GridPane>
        <VScroll>
          <ScrollBtn><Tri d="up" /></ScrollBtn>
          <VThumb />
          <Spring />
          <ScrollBtn><Tri /></ScrollBtn>
        </VScroll>
      </SheetArea>

      <SheetTabs>
        <NavArrows><Tri d="left" c="#c8c8c8" /><Tri d="right" c="#c8c8c8" /></NavArrows>
        <SheetTab>export_catalog_product_20210528</SheetTab>
        <AddSheet><PlusCircle /></AddSheet>
        <HDots><Vdots /></HDots>
        <HScroll>
          <HBtn $w={15}><Tri d="left" /></HBtn>
          <HBtn $w={65} />
          <Spring />
          <HBtn $w={14}><Tri d="right" /></HBtn>
        </HScroll>
      </SheetTabs>

      <StatusBar>
        <Ready>Ready</Ready>
        <StatusRight>
          <Count>Count: 4</Count>
          <ViewBtn $w={40} $on><NormalV /></ViewBtn>
          <ViewBtn $w={40}><PageV /></ViewBtn>
          <ViewBtn $w={40}><BreakV /></ViewBtn>
          <ViewBtn $w={18}><svg width="8" height="2"><rect width="8" height="1" fill="#666" /></svg></ViewBtn>
          <Slider><SliderThumb /></Slider>
          <ViewBtn $w={18}><svg width="9" height="9"><path d="M0 4.500h9M4.500 0v9" stroke="#666" /></svg></ViewBtn>
          <ViewBtn $w={42} $pr={5}>100%</ViewBtn>
        </StatusRight>
      </StatusBar>

      <Menu>
        <MenuItem><MenuIcon><SortAZ /></MenuIcon><MenuLabel><Key>S</Key>ort A to Z</MenuLabel></MenuItem>
        <MenuItem><MenuIcon><SortAZ rev /></MenuIcon><MenuLabel>S<Key>o</Key>rt Z to A</MenuLabel></MenuItem>
        <MenuItem><MenuIcon><CustomSort /></MenuIcon><MenuLabel>C<Key>u</Key>stom Sort...</MenuLabel></MenuItem>
        <MenuSep />
        <MenuItem $on><MenuIcon><Funnel c="#666" /></MenuIcon><MenuLabel><Key>F</Key>ilter</MenuLabel></MenuItem>
        <MenuItem $off><MenuIcon><ClearF /></MenuIcon><MenuLabel><Key>C</Key>lear</MenuLabel></MenuItem>
        <MenuItem $off><MenuIcon><Reapply /></MenuIcon><MenuLabel>Reapply</MenuLabel></MenuItem>
      </Menu>

      <Overlay $x={0} $y={140} width="20" height="85" viewBox="0 0 20 85">
        <ArrowShape d="M2 4C2 1 11 1 11.500 4L11 65h6L9 83 0 65h4z" />
      </Overlay>
      <Overlay $x={1160} $y={82} width="110" height="30" viewBox="0 0 110 30">
        <ArrowShape d="M3 3 88 10 86 2 108 18 88 28 89 19 3 13C0 11 0 5 3 3z" />
      </Overlay>
      <Overlay $x={1180} $y={214} width="90" height="26" viewBox="0 0 90 26">
        <ArrowShape d="M4 10 66 8 65 2 86 12 68 23 67 16 4 18C0 17 0 11 4 10z" />
      </Overlay>
    </Page>
  );
}
